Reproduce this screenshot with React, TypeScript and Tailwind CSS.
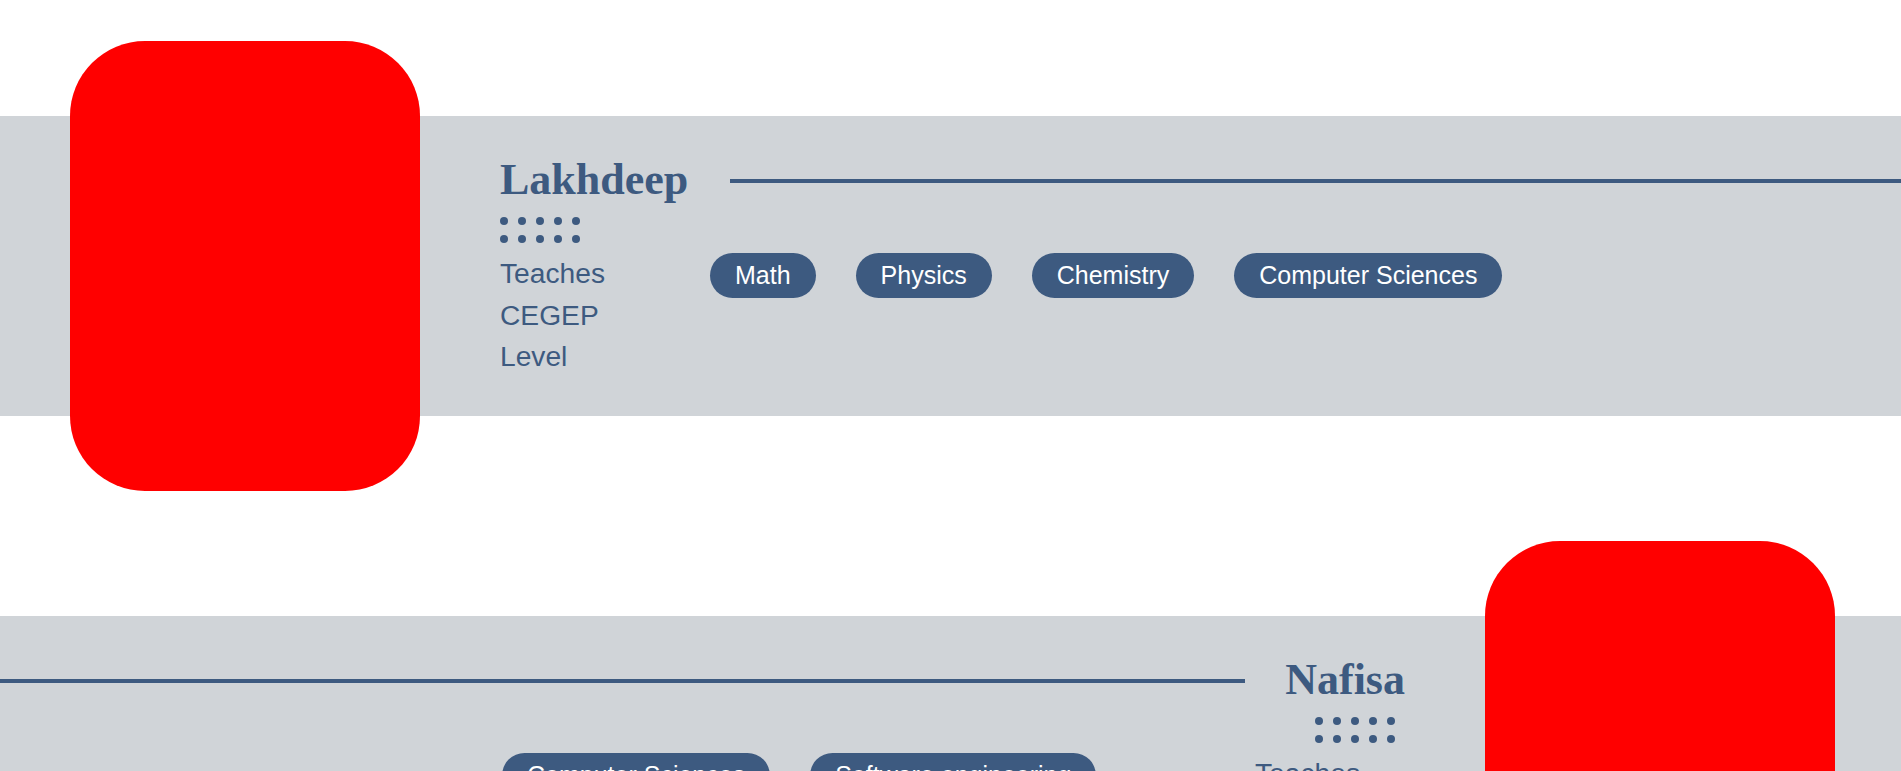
import React from "react";

function Dots() {
  return (
    <div className="flex h-[36px] w-[90px] flex-col gap-[10px]">
      {[0, 1].map((r) => (
        <div key={r} className="flex gap-[10px]">
          {[0, 1, 2, 3, 4].map((c) => (
            <span key={c} className="block h-[8px] w-[8px] rounded-full bg-[#3d5a80]" />
          ))}
        </div>
      ))}
    </div>
  );
}

function Pill({ label }: { label: string }) {
  return (
    <span className="flex h-[45px] shrink-0 items-center whitespace-nowrap rounded-full bg-[#3d5a80] px-[25px] font-['Liberation_Sans',Arial,sans-serif] text-[25px] leading-none text-white">
      {label}
    </span>
  );
}

function Teaches() {
  return (
    <p className="w-[150px] shrink-0 font-['Liberation_Sans',Arial,sans-serif] text-[28.2px] leading-[41.5px] text-[#3d5a80]">
      Teaches CEGEP Level
    </p>
  );
}

function Name({ children }: { children: React.ReactNode }) {
  return (
    <h2 className="shrink-0 whitespace-nowrap font-['Liberation_Serif','Times_New_Roman',serif] text-[44px] font-bold leading-[44px] text-[#3d5a80]">
      {children}
    </h2>
  );
}

export default function App() {
  return (
    <div className="flex min-h-screen flex-col gap-[200px] bg-white pb-[200px] pt-[116px]">
      <section className="flex h-[300px] items-center bg-[#d0d4d8]">
        <div className="ml-[70px] h-[450px] w-[350px] shrink-0 rounded-[75px] bg-[#ff0000]" />
        <div className="ml-[80px] flex h-full min-w-0 flex-1 flex-col pt-[42px]">
          <div className="flex items-center">
            <Name>Lakhdeep</Name>
            <div className="ml-[42px] mt-[2px] h-[4px] flex-1 bg-[#3d5a80]" />
          </div>
          <div className="mt-[15px]">
            <Dots />
          </div>
          <div className="flex items-start">
            <Teaches />
            <div className="ml-[60px] flex gap-[40px]">
              <Pill label="Math" />
              <Pill label="Physics" />
              <Pill label="Chemistry" />
              <Pill label="Computer Sciences" />
            </div>
          </div>
        </div>
      </section>

      <section className="flex h-[300px] items-center bg-[#d0d4d8]">
        <div className="flex h-full min-w-0 flex-1 flex-col items-end pt-[42px]">
          <div className="flex w-full items-center">
            <div className="mr-[40px] mt-[2px] h-[4px] flex-1 bg-[#3d5a80]" />
            <Name>Nafisa</Name>
          </div>
          <div className="mt-[15px]">
            <Dots />
          </div>
          <div className="flex w-full items-start justify-between pl-[502px]">
            <div className="flex gap-[40px]">
              <Pill label="Computer Sciences" />
              <Pill label="Software engineering" />
            </div>
            <Teaches />
          </div>
        </div>
        <div className="ml-[80px] mr-[66px] h-[450px] w-[350px] shrink-0 rounded-[75px] bg-[#ff0000]" />
      </section>
    </div>
  );
}
